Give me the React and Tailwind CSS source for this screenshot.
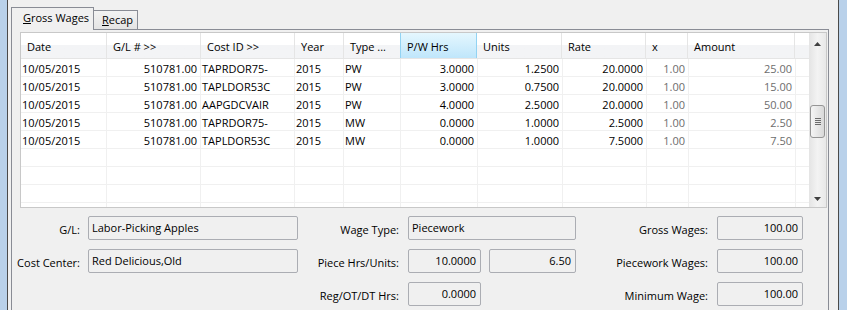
import clsx from 'clsx'

const COLUMNS = [
  { label: 'Date', w: 'w-[86px]', align: 'left' },
  { label: 'G/L # >>', w: 'w-[94px]', align: 'right' },
  { label: 'Cost ID >>', w: 'w-[94px]', align: 'left' },
  { label: 'Year', w: 'w-[49px]', align: 'left' },
  { label: 'Type ...', w: 'w-[57px]', align: 'left' },
  { label: 'P/W Hrs', w: 'w-[77px]', align: 'right', active: true },
  { label: 'Units', w: 'w-[85px]', align: 'right' },
  { label: 'Rate', w: 'w-[84px]', align: 'right' },
  { label: 'x', w: 'w-[42px]', align: 'right', gray: true },
  { label: 'Amount', w: 'w-[107px]', align: 'right', gray: true },
]

const ROWS = [
  ['10/05/2015', '510781.00', 'TAPRDOR75-', '2015', 'PW', '3.0000', '1.2500', '20.0000', '1.00', '25.00'],
  ['10/05/2015', '510781.00', 'TAPLDOR53C', '2015', 'PW', '3.0000', '0.7500', '20.0000', '1.00', '15.00'],
  ['10/05/2015', '510781.00', 'AAPGDCVAIR', '2015', 'PW', '4.0000', '2.5000', '20.0000', '1.00', '50.00'],
  ['10/05/2015', '510781.00', 'TAPRDOR75-', '2015', 'MW', '0.0000', '1.0000', '2.5000', '1.00', '2.50'],
  ['10/05/2015', '510781.00', 'TAPLDOR53C', '2015', 'MW', '0.0000', '1.0000', '7.5000', '1.00', '7.50'],
  null,
  null,
  null,
  null,
]

function Field({ children, right, className }) {
  return (
    <div
      className={clsx(
        'h-[24px] rounded-[2px] border border-[#abadb3] bg-[#f0f0f0] leading-[22px] whitespace-nowrap',
        right ? 'pr-[4px] text-right' : 'pl-[3px]',
        className,
      )}
    >
      {children}
    </div>
  )
}

function Label({ children, className }) {
  return (
    <div className={clsx('h-[24px] pt-[2px] text-right leading-[24px] whitespace-nowrap', className)}>
      {children}
    </div>
  )
}

function Scrollbar() {
  return (
    <div className="flex w-[17px] shrink-0 flex-col bg-gradient-to-r from-[#e4e4e4] via-[#f3f3f3] to-[#e8e8e8]">
      <div className="flex h-[17px] justify-center pt-[9px]">
        <svg width="7" height="4" viewBox="0 0 7 4">
          <path d="M3.5 0 L7 4 L0 4 Z" fill="#404040" />
        </svg>
      </div>
      <div className="mx-px mt-[55px] flex h-[33px] flex-col items-center justify-center gap-[1px] rounded-[3px] border border-[#959595] bg-gradient-to-r from-[#f5f5f5] to-[#d9d9d9]">
        {[0, 1, 2, 3].map((i) => (
          <div key={i} className="h-px w-[6px] bg-[#6b6b6b]" />
        ))}
      </div>
      <div className="flex-1" />
      <div className="flex h-[17px] justify-center pt-[7px]">
        <svg width="7" height="4" viewBox="0 0 7 4">
          <path d="M0 0 L7 0 L3.5 4 Z" fill="#404040" />
        </svg>
      </div>
    </div>
  )
}

function WagesGrid() {
  return (
    <div className="ml-[8px] mr-px flex h-[176px] overflow-hidden border border-[#c8c8c8] bg-white">
      <div className="flex min-w-0 flex-1 flex-col overflow-hidden">
        <div className="flex h-[26px] shrink-0 border-b border-[#e5e5e5] bg-gradient-to-b from-white from-50% to-[#f3f4f6] to-50%">
          {COLUMNS.map((col) => (
            <div
              key={col.label}
              className={clsx(
                'shrink-0 truncate border-r pl-[6px] pt-[2px] leading-[23px]',
                col.w,
                col.active
                  ? 'border-l border-[#92d3f3] bg-gradient-to-b from-[#e5f7fe] to-[#bfe6fb] -ml-px'
                  : 'border-[#e5e5e5]',
              )}
            >
              {col.label}
            </div>
          ))}
          <div className="flex-1" />
        </div>
        {ROWS.map((row, r) => (
          <div key={r} className="flex h-[18px] shrink-0 border-b border-[#f0f0f0]">
            {COLUMNS.map((col, c) => (
              <div
                key={col.label}
                className={clsx(
                  'shrink-0 whitespace-nowrap border-r border-[#f0f0f0] pt-[2px] leading-[15px]',
                  col.w,
                  col.align === 'right' ? 'pr-[3px] text-right' : 'pl-[1px]',
                  col.gray ? 'text-[#6d6d6d]' : 'text-black',
                )}
              >
                {row ? row[c] : ''}
              </div>
            ))}
            <div className="flex-1" />
          </div>
        ))}
      </div>
      <Scrollbar />
    </div>
  )
}

function TotalsForm() {
  return (
    <div className="mt-[8px] grid grid-cols-[76px_210px_110px_168px_141px_86px] gap-y-[9px]">
      <Label className="pr-[8px]">G/L:</Label>
      <Field>Labor-Picking Apples</Field>
      <Label className="pr-[9px]">Wage Type:</Label>
      <Field>Piecework</Field>
      <Label className="pr-[9px]">Gross Wages:</Label>
      <Field right>100.00</Field>

      <Label className="pr-[8px]">Cost Center:</Label>
      <Field>Red Delicious,Old</Field>
      <Label className="pr-[9px]">Piece Hrs/Units:</Label>
      <div className="flex gap-[8px]">
        <Field right className="w-[73px]">10.0000</Field>
        <Field right className="flex-1">6.50</Field>
      </div>
      <Label className="pr-[9px]">Piecework Wages:</Label>
      <Field right>100.00</Field>

      <div />
      <div />
      <Label className="pr-[9px]">Reg/OT/DT Hrs:</Label>
      <div className="flex">
        <Field right className="w-[73px]">0.0000</Field>
      </div>
      <Label className="pr-[9px]">Minimum Wage:</Label>
      <Field right>100.00</Field>
    </div>
  )
}

export default function App() {
  return (
    <div className="flex h-[310px] w-[847px] overflow-hidden bg-[#f0f0f0] font-['Open_Sans',sans-serif] text-[11px] text-black">
      <div className="w-[7px] shrink-0 bg-[#b9d1ea]" />
      <div className="w-px shrink-0 bg-[#4a4a4a]" />
      <div className="flex min-w-0 flex-1 flex-col pl-[3px] pr-[9px] pt-[7px]">
        <div className="flex h-[22px] shrink-0 items-end">
          <div className="relative z-10 -mb-px h-[23px] w-[83px] shrink-0 border-x border-t border-[#898c95] bg-[#f0f0f0] pl-[11px] pt-[2px] leading-[15px]">
            <span className="underline-offset-[1px]">
              <u>G</u>ross Wages
            </span>
          </div>
          <div className="h-[19px] w-[44px] shrink-0 border-r border-t border-[#898c95] bg-gradient-to-b from-[#f3f3f3] to-[#e4e4e4] pl-[8px] pt-[1px] leading-[15px]">
            <u>R</u>ecap
          </div>
        </div>
        <div className="flex-1 border-x border-t border-[#898c95] pt-[2px]">
          <WagesGrid />
          <TotalsForm />
        </div>
      </div>
      <div className="w-px shrink-0 bg-[#4a4a4a]" />
      <div className="w-[8px] shrink-0 bg-[#b9d1ea]" />
    </div>
  )
}
